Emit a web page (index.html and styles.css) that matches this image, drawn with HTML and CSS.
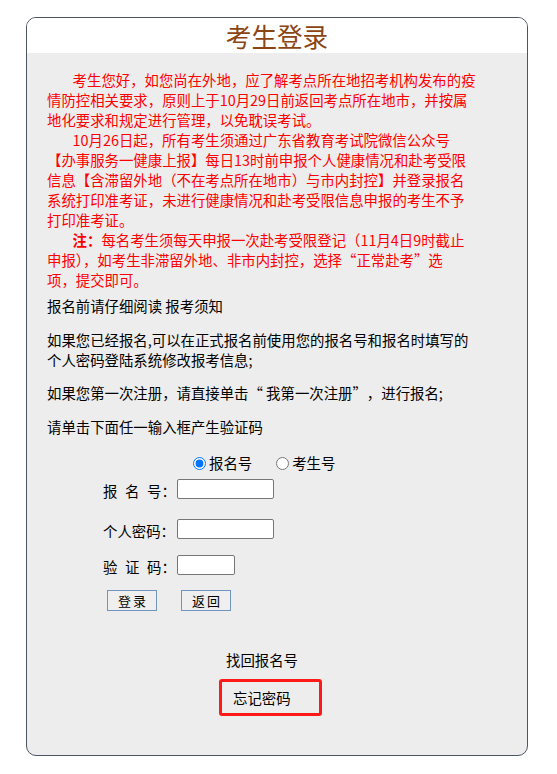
FILE: index.html
```html
<!DOCTYPE html>
<html lang="zh-CN">
<head>
<meta charset="utf-8">
<title>考生登录</title>
<link rel="stylesheet" href="styles.css">
</head>
<body>
<div class="card">
  <div class="head">考生登录</div>
  <div class="content">
    <div class="notice">
      <p>考生您好，如您尚在外地，应了解考点所在地招考机构发布的疫<br>情防控相关要求，原则上于10月29日前返回考点所在地市，并按属<br>地化要求和规定进行管理，以免耽误考试。</p>
      <p>10月26日起，所有考生须通过广东省教育考试院微信公众号<br>【办事服务一健康上报】每日13时前申报个人健康情况和赴考受限<br>信息【含滞留外地（不在考点所在地市）与市内封控】并登录报名<br>系统打印准考证，未进行健康情况和赴考受限信息申报的考生不予<br>打印准考证。</p>
      <p><b>注：</b>每名考生须每天申报一次赴考受限登记（11月4日9时截止<br>申报），如考生非滞留外地、非市内封控，选择“正常赴考”选<br>项，提交即可。</p>
    </div>
    <div class="intro">
      <p class="first">报名前请仔细阅读 报考须知</p>
      <p>如果您已经报名,可以在正式报名前使用您的报名号和报名时填写的<br>个人密码登陆系统修改报考信息;</p>
      <p class="p3">如果您第一次注册，请直接单击<span class="q">“</span> 我第一次注册<span class="q">”</span>，进行报名;</p>
      <p>请单击下面任一输入框产生验证码</p>
    </div>
    <div class="radios">
      <label class="opt"><input class="radio" type="radio" name="t" checked>报名号</label>
      <label class="opt opt2"><input class="radio" type="radio" name="t">考生号</label>
    </div>
    <div class="row row1">
      <span class="lbl"><span class="sp">报名</span>号：</span>
      <input class="field" type="text">
    </div>
    <div class="row row2">
      <span class="lbl">个人密码：</span>
      <input class="field" type="password">
    </div>
    <div class="row row3">
      <span class="lbl"><span class="sp">验证</span>码：</span>
      <input class="field short" type="text">
    </div>
    <div class="btns">
      <button class="btn" type="button">登录</button>
      <button class="btn btn2" type="button">返回</button>
    </div>
    <div class="link">找回报名号</div>
    <div class="forgot">忘记密码</div>
  </div>
</div>
</body>
</html>
```
FILE: styles.css
```css
html, body {
  margin: 0;
  padding: 0;
  background: #ffffff;
}
body {
  font-family: "Noto Sans CJK SC", "Microsoft YaHei", sans-serif;
}
.card {
  margin: 17px 0 0 26px;
  width: 500px;
  border: 1px solid #4b5563;
  border-radius: 10px;
  overflow: hidden;
  background: #ededed;
}
.head {
  height: 35px;
  line-height: 35px;
  background: #ffffff;
  text-align: center;
  font-size: 25.6px;
  color: #8b4513;
}
.content {
  padding: 17px 0 39px 20px;
  font-size: 14.4px;
  line-height: 20px;
  color: #000;
}
.notice {
  color: #ff0000;
}
.notice p {
  margin: 0;
  text-indent: 25.6px;
  white-space: nowrap;
}
.notice b {
  font-weight: bold;
}
.intro p {
  margin: 14px 0 0;
  white-space: nowrap;
}
.intro p.first {
  margin-top: 6px;
}
.intro p.p3 {
  margin-top: 13px;
}
.q {
  display: inline-block;
  width: 14.4px;
  text-align: center;
}
.radios {
  margin-top: 16px;
  height: 20px;
  display: flex;
  align-items: center;
  padding-left: 146px;
}
.opt {
  display: flex;
  align-items: center;
}
.opt2 {
  margin-left: 24px;
}
.radio {
  margin: 0 3px 0 0;
  width: 13px;
  height: 13px;
}
.row {
  display: flex;
  align-items: flex-start;
  height: 20px;
  padding-left: 56px;
}
.row1 { margin-top: 6px; }
.row2 { margin-top: 20px; }
.row3 { margin-top: 16px; }
.lbl {
  width: 74px;
  margin-top: 2px;
  white-space: nowrap;
}
.sp {
  letter-spacing: 7.6px;
}
.field {
  box-sizing: border-box;
  width: 97px;
  height: 20px;
  margin: 0;
  padding: 0 2px;
  border: 1px solid #767676;
  border-radius: 2px;
  background: #ffffff;
}
.field.short {
  width: 58px;
}
.btns {
  margin-top: 15px;
  padding-left: 60px;
  display: flex;
}
.btn {
  box-sizing: border-box;
  width: 50px;
  height: 21px;
  margin: 0;
  padding: 0 0 0 2px;
  border: 1px solid #7094c0;
  border-radius: 0;
  background: #efefef;
  font-family: "Noto Sans CJK SC", sans-serif;
  font-size: 13px;
  letter-spacing: 2px;
  color: #000;
  line-height: 19px;
}
.btn2 {
  margin-left: 24px;
}
.link {
  margin-top: 39px;
  padding-left: 179px;
}
.forgot {
  margin: 9px 0 0 172px;
  box-sizing: border-box;
  width: 103px;
  height: 37px;
  border: 3px solid #ff1a1a;
  border-radius: 3px;
  padding-left: 11px;
  line-height: 31px;
}
```
